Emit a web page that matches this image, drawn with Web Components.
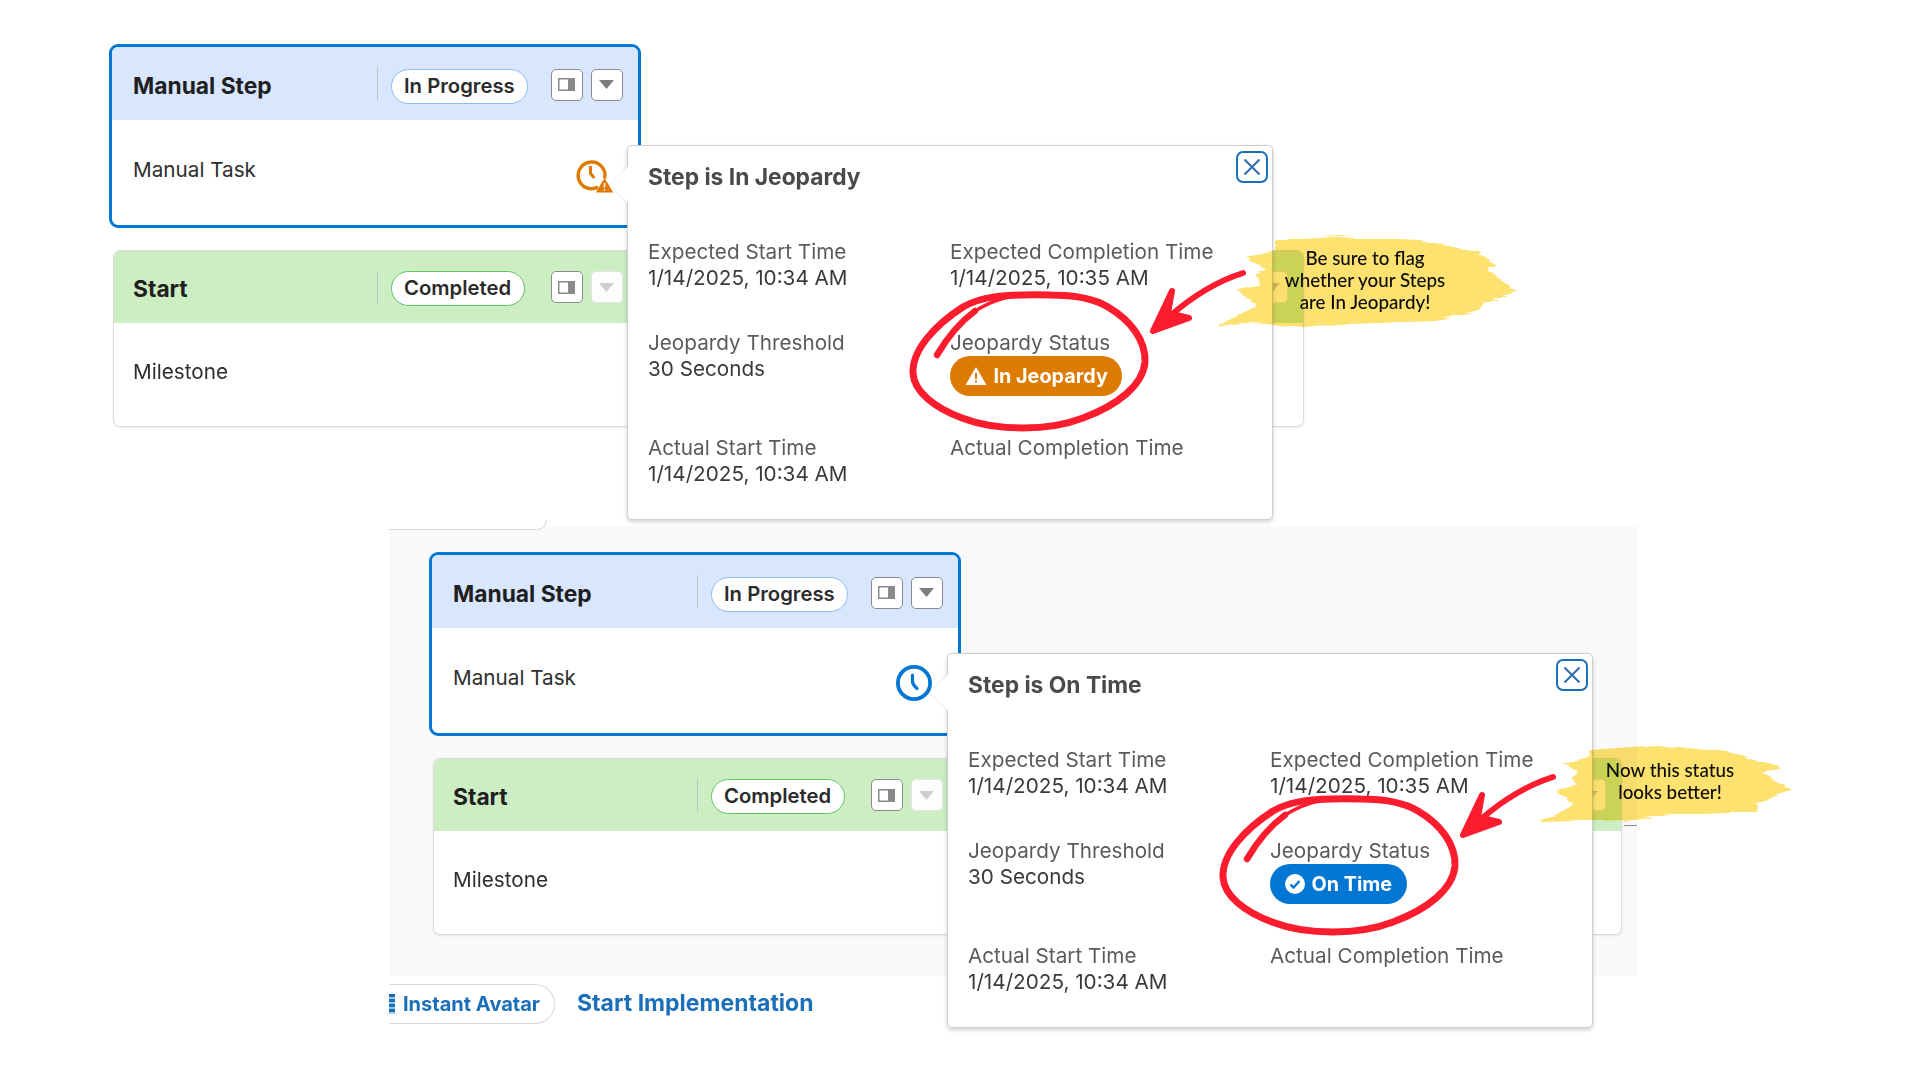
<!DOCTYPE html>
<html>
<head>
<meta charset="utf-8">
<title>Step jeopardy status</title>
<style>
  html, body { margin: 0; background: #fff; }
  body { width: 1920px; height: 1080px; overflow: hidden; position: relative; font-family: Inter, "Liberation Sans", sans-serif; }
  #shotA { position: absolute; left: 109px; top: 44px; }
  #lower { position: absolute; left: 389px; top: 526px; }
  #noteA { position: absolute; left: 1220px; top: 234px; }
  #noteB { position: absolute; left: 1540px; top: 744px; }
  #marksA { position: absolute; left: 900px; top: 260px; }
  #marksB { position: absolute; left: 1210px; top: 764px; }
</style>
</head>
<body>

<step-shot id="shotA">
  <step-card selected tone="blue" heading="Manual Step" status="In Progress" task="Manual Task" style="width:532px">
    <clock-icon slot="icon" warn></clock-icon>
  </step-card>
  <step-card ghost tone="green" heading="Start" status="Completed" task="Milestone" style="width:1191px"></step-card>
  <jeopardy-popover heading="Step is In Jeopardy" state="warn" chip="In Jeopardy"></jeopardy-popover>
</step-shot>

<lower-canvas id="lower">
  <step-shot>
    <step-card selected tone="blue" heading="Manual Step" status="In Progress" task="Manual Task" style="width:532px">
      <clock-icon slot="icon" style="margin-right:1px"></clock-icon>
    </step-card>
    <step-card ghost tone="green" heading="Start" status="Completed" task="Milestone" style="width:1189px"></step-card>
    <jeopardy-popover heading="Step is On Time" state="ok" chip="On Time"></jeopardy-popover>
  </step-shot>
</lower-canvas>

<brush-note id="noteA" box="1220 234 296 96" dx="-3" dy="-2"
  points="1275,240 1337,236 1420,240 1480,253 1487,258 1497,267 1487,268 1516,292 1487,302 1475,312 1437,320 1353,323 1303,327 1253,323 1218,327 1240,315 1257,305 1237,290 1263,285 1255,275 1265,270 1245,257 1275,250">Be sure to flag<br>whether your Steps<br>are In Jeopardy!</brush-note>
<brush-note id="noteB" box="1540 744 252 82" dx="4" dy="-4"
  points="1590,750 1657,745 1727,752 1782,768 1762,773 1792,790 1757,803 1757,812 1673,815 1623,820 1540,822 1573,805 1557,790 1578,785 1572,778 1578,772 1563,763 1590,757">Now this status<br>looks better!</brush-note>

<red-marks id="marksA"></red-marks>
<red-marks id="marksB"></red-marks>

<script>
class ClockIcon extends HTMLElement {
  connectedCallback() {
    const warn = this.hasAttribute('warn');
    const color = warn ? '#dd7a01' : '#0176d3';
    this.attachShadow({mode: 'open'}).innerHTML = `
      <style>
        :host { display: block; width: 36px; height: 36px; }
        :host([warn]) { margin-top: 3px; }
        svg { display: block; overflow: visible; }
      </style>
      <svg width="36" height="36" viewBox="0 0 36 36">
        ${warn
          ? `<g transform="translate(-2 -2.5)">
               <path d="M23 29.6A13.4 13.4 0 1 1 29.6 21" fill="none" stroke="${color}" stroke-width="3.4"/>
               <path d="M15.5 9.5v6.5l3 3.5" fill="none" stroke="${color}" stroke-width="3" stroke-linecap="round"/>
             </g>
             <path d="M27.5 18l8.8 14.4H18.7z" fill="${color}"/>
             <path d="M27.5 23v4.6M27.5 29v1.6" stroke="#fff" stroke-width="1.6"/>`
          : `<circle cx="18" cy="18" r="16.1" fill="none" stroke="${color}" stroke-width="3.8"/>
             <path d="M16.5 10v7q.5 3 4.5 6.5" fill="none" stroke="${color}" stroke-width="3.2" stroke-linecap="round"/>`}
      </svg>`;
  }
}
customElements.define('clock-icon', ClockIcon);

class IconButton extends HTMLElement {
  connectedCallback() {
    const glyph = this.getAttribute('glyph');
    this.attachShadow({mode: 'open'}).innerHTML = `
      <style>
        :host { display: grid; place-items: center; width: 32px; height: 32px; box-sizing: border-box; flex: none;
                background: #fff; border: 1.5px solid #8b8b8b; border-radius: 5px; }
        :host([off]) { border-color: #e6e6e6; background: #fdfdfd; }
        svg { display: block; }
      </style>
      ${glyph === 'panel'
        ? `<svg width="17" height="13" viewBox="0 0 17 13"><rect x=".75" y=".75" width="15.5" height="11.5" fill="#fff" stroke="#8a8a8a" stroke-width="1.5"/><rect x="10" y="1" width="6" height="11" fill="#8a8a8a"/></svg>`
        : `<svg width="15" height="9" viewBox="0 0 15 9"><path d="M0 0h15L7.5 9z" fill="${this.hasAttribute('off') ? '#cfcfcf' : '#7d7d7d'}"/></svg>`}`;
  }
}
customElements.define('icon-button', IconButton);

class StatusPill extends HTMLElement {
  connectedCallback() {
    this.attachShadow({mode: 'open'}).innerHTML = `
      <style>
        :host { display: inline-flex; align-items: center; height: 35px; box-sizing: border-box; padding: 0 12.5px;
                background: #fff; border: 1.5px solid var(--pill, #8fbcf5); border-radius: 18px;
                font: 600 20.3px/1 Inter, "Liberation Sans", sans-serif; color: #2b2b2b; white-space: nowrap; }
      </style>
      <slot></slot>`;
  }
}
customElements.define('status-pill', StatusPill);

class StepCard extends HTMLElement {
  connectedCallback() {
    const selected = this.hasAttribute('selected');
    const green = this.getAttribute('tone') === 'green';
    this.attachShadow({mode: 'open'}).innerHTML = `
      <style>
        :host { display: block; box-sizing: border-box; background: #fff; overflow: hidden;
                border: 1px solid #dcdcdc; border-radius: 7px; box-shadow: 0 1px 2px rgba(0,0,0,.08); }
        :host([selected]) { border: 3px solid #0176d3; border-radius: 9px; box-shadow: none; }
        header { display: flex; align-items: center; box-sizing: border-box; height: 72px; padding: 3px 15px 0 19px; background: #cdeec3; }
        :host([selected]) header { height: 73px; padding-top: 5px; padding-left: 21px; background: #d8e6fe; }
        h2 { flex: 0 0 244px; margin: 0; font: 700 22.8px/26px Inter, "Liberation Sans", sans-serif; color: #1f1f1f; }
        .bar { flex: none; width: 1px; height: 33px; margin-top: -3px; background: #bcc4c8; }
        :host([selected]) .bar { margin-top: -5px; }
        .cell { flex: 0 0 173px; box-sizing: border-box; padding-left: 12.5px; --pill: ${green ? '#5bc466' : '#8fbcf5'}; }
        .btns { display: flex; gap: 8px; margin-top: -3px; margin-left: -.5px; }
        .ghost { margin-left: auto; margin-top: -3px; }
        .body { display: flex; justify-content: space-between; align-items: flex-start; box-sizing: border-box;
                height: 103px; padding: 36px 25px 0 19px; font: 400 20.7px/26px Inter, "Liberation Sans", sans-serif; color: #2e2e2e; }
        :host([selected]) .body { height: 105px; padding-left: 21px; padding-top: 37px; }
      </style>
      <header>
        <h2>${this.getAttribute('heading')}</h2>
        <span class="bar"></span>
        <div class="cell"><status-pill>${this.getAttribute('status')}</status-pill></div>
        <div class="btns">
          <icon-button glyph="panel"></icon-button>
          <icon-button glyph="drop" ${selected ? '' : 'off'}></icon-button>
        </div>
        ${this.hasAttribute('ghost') ? '<icon-button class="ghost" glyph="drop" off></icon-button>' : ''}
      </header>
      <div class="body"><span>${this.getAttribute('task')}</span><slot name="icon"></slot></div>`;
  }
}
customElements.define('step-card', StepCard);

class JeopardyPopover extends HTMLElement {
  connectedCallback() {
    const warn = this.getAttribute('state') === 'warn';
    const glyph = warn
      ? `<svg width="22" height="20" viewBox="0 0 22 20"><path d="M11 1l10.5 18H.5z" fill="#fff"/><path d="M11 7v6M11 14.6v2" stroke="#dd7a01" stroke-width="2"/></svg>`
      : `<svg width="20" height="20" viewBox="0 0 20 20"><circle cx="10" cy="10" r="10" fill="#fff"/><path d="M5.5 10.5l3 3 6-6.5" fill="none" stroke="#0176d3" stroke-width="2.4"/></svg>`;
    this.attachShadow({mode: 'open'}).innerHTML = `
      <style>
        :host { position: absolute; left: 518px; top: 101px; width: 646px; box-sizing: border-box; z-index: 2;
                background: #fff; border: 1px solid #cfcfcf; border-radius: 5px; box-shadow: 0 2px 4px rgba(0,0,0,.18);
                padding: 18px 19px 32px 20px; font: 400 20.7px/26px Inter, "Liberation Sans", sans-serif; color: #3a3a3a; }
        .nub { position: absolute; left: -13px; top: 26px; width: 25px; height: 25px; background: #fff; transform: rotate(45deg);
               box-shadow: -1px 1px 1px rgba(0,0,0,.07); }
        h3 { position: relative; margin: 0 0 49px; font: 700 22.8px/26px Inter, "Liberation Sans", sans-serif; color: #4a4a4a; }
        .close { position: absolute; right: 4px; top: 5px; width: 32px; height: 32px; box-sizing: border-box; display: grid; place-items: center;
                 border: 2.5px solid #1b6fb8; border-radius: 7px; }
        .grid { position: relative; display: grid; grid-template-columns: 302px 1fr; row-gap: 39px; }
        .label { color: #5b5b5b; }
        .item > * { display: block; }
        .item > .chip { display: inline-flex; align-items: center; gap: 7px; height: 40px; box-sizing: border-box; padding: 0 14.5px;
                border-radius: 20px; color: #fff; font-weight: 700; font-size: 19.8px; background: ${warn ? '#dd7a01' : '#0176d3'}; }
        .chip svg { display: block; flex: none; }
      </style>
      <span class="nub"></span>
      <div class="close"><svg width="18" height="18" viewBox="0 0 18 18"><path d="M1.5 1.5l15 15M16.5 1.5l-15 15" stroke="#2d6cb0" stroke-width="2"/></svg></div>
      <h3>${this.getAttribute('heading')}</h3>
      <div class="grid">
        <div class="item"><span class="label">Expected Start Time</span><span>1/14/2025, 10:34 AM</span></div>
        <div class="item"><span class="label">Expected Completion Time</span><span>1/14/2025, 10:35 AM</span></div>
        <div class="item"><span class="label">Jeopardy Threshold</span><span>30 Seconds</span></div>
        <div class="item"><span class="label">Jeopardy Status</span><span class="chip">${glyph}${this.getAttribute('chip')}</span></div>
        <div class="item"><span class="label">Actual Start Time</span><span>1/14/2025, 10:34 AM</span></div>
        <div class="item"><span class="label">Actual Completion Time</span></div>
      </div>`;
  }
}
customElements.define('jeopardy-popover', JeopardyPopover);

class StepShot extends HTMLElement {
  connectedCallback() {
    this.attachShadow({mode: 'open'}).innerHTML = `
      <style>
        :host { display: flex; flex-direction: column; align-items: flex-start; gap: 22px; position: relative; width: 1195px; filter: blur(.5px); }
        ::slotted(step-card:not([selected])) { margin-left: 4px; }
      </style>
      <slot></slot>`;
  }
}
customElements.define('step-shot', StepShot);

class LowerCanvas extends HTMLElement {
  connectedCallback() {
    this.attachShadow({mode: 'open'}).innerHTML = `
      <style>
        :host { display: block; width: 1248px; font-family: Inter, "Liberation Sans", sans-serif; }
        .back { position: relative; box-sizing: border-box; height: 450px; padding: 26px 0 0 40px; background: #f9f9f9; }
        .back::before { content: ""; position: absolute; left: 0; top: -6px; width: 158px; height: 10px; box-sizing: border-box;
                        border-bottom: 1px solid #dcdcdc; border-right: 1px solid #dcdcdc; border-bottom-right-radius: 14px; background: #fff; }
        .back::after { content: ""; position: absolute; right: 0; top: 299px; width: 13px; height: 1px; background: #8c8c8c; }
        footer { display: flex; align-items: center; gap: 22px; margin-top: 8px; filter: blur(.5px); }
        .tab { display: flex; align-items: center; gap: 8px; height: 40px; box-sizing: border-box; width: 166px; flex: none;
               border: 1.5px solid #d9d9d9; border-left: 0; border-radius: 0 20px 20px 0;
               color: #1b6fb8; font: 700 20px/1 Inter, "Liberation Sans", sans-serif; white-space: nowrap; overflow: hidden; }
        .tab i { flex: none; width: 6px; height: 20px; background: repeating-linear-gradient(#1b6fb8 0 3px, #9cc6ea 3px 5px); }
        .link { color: #1b6fb8; font: 700 23px/1 Inter, "Liberation Sans", sans-serif; position: relative; top: -1px; }
      </style>
      <div class="back"><slot></slot></div>
      <footer><div class="tab"><i></i>Instant Avatar</div><span class="link">Start Implementation</span></footer>`;
  }
}
customElements.define('lower-canvas', LowerCanvas);

class BrushNote extends HTMLElement {
  connectedCallback() {
    const [, , w, h] = this.getAttribute('box').split(' ').map(Number);
    const dx = Number(this.getAttribute('dx')), dy = Number(this.getAttribute('dy'));
    const fid = 'rough' + this.id;
    this.attachShadow({mode: 'open'}).innerHTML = `
      <style>
        :host { display: grid; width: ${w}px; height: ${h}px; z-index: 3; mix-blend-mode: multiply; }
        svg, .text { grid-area: 1 / 1; }
        svg { display: block; overflow: visible; }
        .text { place-self: center; transform: translate(${dx}px, ${dy}px); text-align: center; color: #0c0c0c;
                font: 500 18.8px/22px Lato, "Open Sans", sans-serif; white-space: nowrap; }
      </style>
      <svg width="${w}" height="${h}" viewBox="${this.getAttribute('box')}">
        <filter id="${fid}" x="-5%" y="-10%" width="110%" height="120%">
          <feTurbulence type="fractalNoise" baseFrequency=".01 .3" numOctaves="2" seed="4"/>
          <feDisplacementMap in="SourceGraphic" scale="6" xChannelSelector="R" yChannelSelector="G"/>
        </filter>
        <polygon points="${this.getAttribute('points')}" fill="#fde26f" filter="url(#${fid})"/>
      </svg>
      <div class="text"><slot></slot></div>`;
  }
}
customElements.define('brush-note', BrushNote);

class RedMarks extends HTMLElement {
  connectedCallback() {
    this.attachShadow({mode: 'open'}).innerHTML = `
      <style>
        :host { display: block; width: 360px; height: 180px; z-index: 4; }
        svg { display: block; }
      </style>
      <svg width="360" height="180" viewBox="900 260 360 180" fill="none" stroke="#fb1c2e" stroke-linecap="round" stroke-linejoin="round">
        <path stroke-width="7" d="M1050 295C1075 295 1095 299 1108 307C1130 320 1146 340 1145 362C1143 385 1118 405 1083 418C1065 425 1045 428 1023 428C1000 428 980 425 962 418C935 408 914 392 913 373C912 350 935 325 963 307C980 297 1000 294 1050 295"/>
        <path stroke-width="3.5" d="M1020 296C1005 296 990 302 975 311"/>
        <path stroke-width="6.5" d="M975 311C960 322 947 338 937 355"/>
        <path stroke-width="6" d="M1243 273C1218 281 1194 295 1170 316"/>
        <path stroke-width="6" fill="#fb1c2e" d="M1172 291L1153 331L1189 318L1168 313Z"/>
      </svg>`;
  }
}
customElements.define('red-marks', RedMarks);
</script>
</body>
</html>
